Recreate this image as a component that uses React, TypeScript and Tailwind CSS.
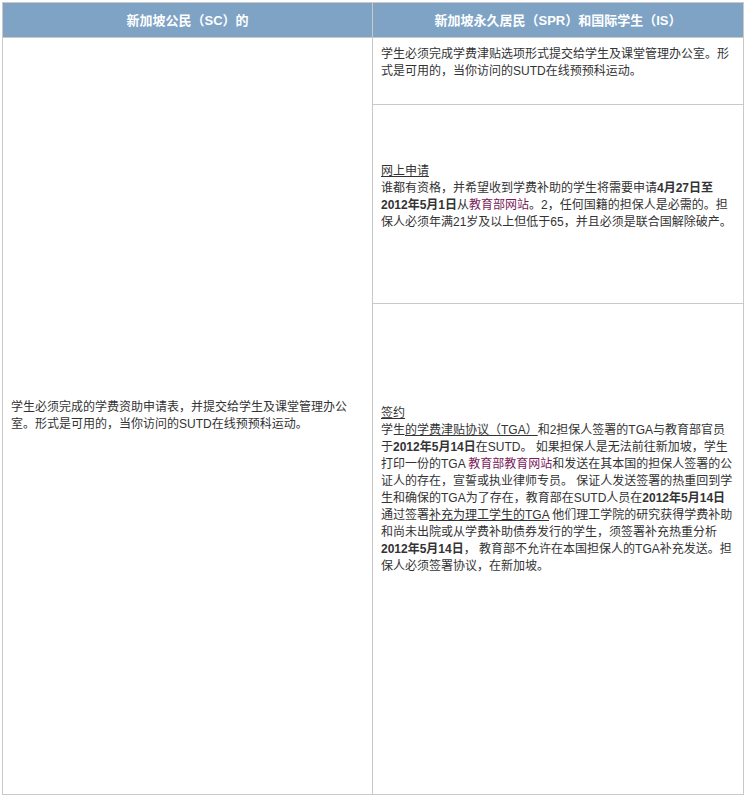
export default function App() {
  const f = { fontFamily: '"Liberation Sans", "Noto Sans CJK SC", sans-serif' };
  const b = "font-bold";
  const link = "text-[#7a1a5a]";
  return (
    <div className="w-[745px] h-[797px] bg-white pt-[2px] pl-[2px] text-[12px] leading-[17px] text-[#333]" style={f}>
      <table className="border-collapse w-[741px] table-fixed">
        <colgroup>
          <col className="w-[370px]" />
          <col className="w-[371px]" />
        </colgroup>
        <thead>
          <tr className="h-[35px] bg-[#7ea3c5] text-white font-bold text-[13px]">
            <th className="border border-[#c9c9c9]">新加坡公民（SC）的</th>
            <th className="border border-[#c9c9c9]">新加坡永久居民（SPR）和国际学生（IS）</th>
          </tr>
        </thead>
        <tbody>
          <tr className="h-[67px]">
            <td rowSpan={3} className="border border-[#c9c9c9] px-[8px] align-middle">
              学生必须完成的学费资助申请表，并提交给学生及课堂管理办公室。形式是可用的，当你访问的SUTD在线预预科运动。
            </td>
            <td className="border border-[#c9c9c9] px-[8px] pt-[8px] align-top">
              学生必须完成学费津贴选项形式提交给学生及课堂管理办公室。形式是可用的，当你访问的SUTD在线预预科运动。
            </td>
          </tr>
          <tr className="h-[199px]">
            <td className="border border-[#c9c9c9] px-[8px] pt-[58px] align-top">
              <div className="underline">网上申请</div>
              <div>
                谁都有资格，并希望收到学费补助的学生将需要申请<span className={b}>4月27日至2012年5月1日</span>从<span className={link}>教育部网站</span>。2，任何国籍的担保人是必需的。担保人必须年满21岁及以上但低于65，并且必须是联合国解除破产。
              </div>
            </td>
          </tr>
          <tr className="h-[491px]">
            <td className="border border-[#c9c9c9] px-[8px] pt-[101px] align-top">
              <div className="underline">签约</div>
              <div>
                学生<span className="underline">的学费津贴协议（TGA）</span>和2担保人签署的TGA与教育部官员于<span className={b}>2012年5月14日</span>在SUTD。 如果担保人是无法前往新加坡，学生打印一份的TGA <span className={link}>教育部教育网站</span>和发送在其本国的担保人签署的公证人的存在，宣誓或执业律师专员。 保证人发送签署的热重回到学生和确保的TGA为了存在，教育部在SUTD人员在<span className={b}>2012年5月14日</span>通过签署<span className="underline">补充为理工学生的TGA</span> 他们理工学院的研究获得学费补助和尚未出院或从学费补助债券发行的学生，须签署补充热重分析<span className={b}>2012年5月14日</span>， 教育部不允许在本国担保人的TGA补充发送。担保人必须签署协议，在新加坡。
              </div>
            </td>
          </tr>
        </tbody>
      </table>
    </div>
  );
}
